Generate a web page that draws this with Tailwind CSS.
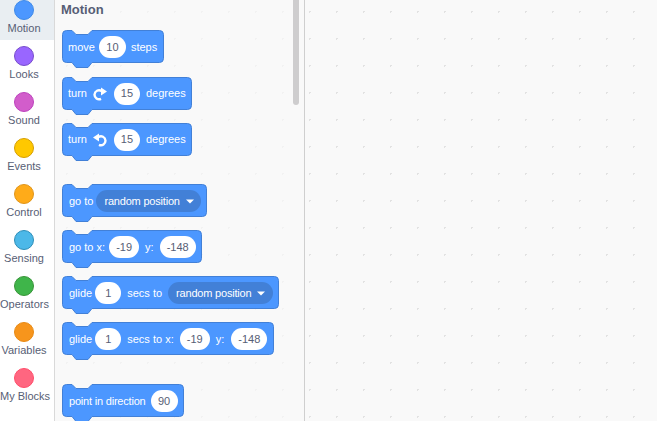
<!DOCTYPE html>
<html lang="en">
  <head>
    <meta charset="UTF-8" />
    <title>Blocks</title>
    <script src="https://cdn.jsdelivr.net/npm/@tailwindcss/browser@4"></script>
  </head>
  <body class="overflow-hidden bg-[#f9f9f9] font-['Liberation_Sans',Arial,sans-serif] text-[11px] text-[#575e75]">
    <div class="flex h-[421px] w-[657px] overflow-hidden">
      <!-- category menu -->
      <div class="flex w-[55px] shrink-0 flex-col border-r border-[#d9d9d9] bg-white pr-[6px] text-center leading-[13px]">
        <div class="-mr-[6px] -mb-[6px] h-[40px] bg-[#e9eef2] pr-[6px]">
          <div class="mx-auto h-5 w-5 rounded-full border border-[#3f8ae8] bg-[#4c97ff]"></div>
          <div class="mt-[2px]">Motion</div>
        </div>
        <div class="mt-[12px] h-[46px]"><div class="mx-auto h-5 w-5 rounded-full border border-[#774dcb] bg-[#9966ff]"></div><div class="mt-[2px]">Looks</div></div>
        <div class="h-[46px]"><div class="mx-auto h-5 w-5 rounded-full border border-[#bd42bd] bg-[#d25dcb]"></div><div class="mt-[2px]">Sound</div></div>
        <div class="h-[46px]"><div class="mx-auto h-5 w-5 rounded-full border border-[#d69e00] bg-[#ffc800]"></div><div class="mt-[2px]">Events</div></div>
        <div class="h-[46px]"><div class="mx-auto h-5 w-5 rounded-full border border-[#e0951a] bg-[#ffab19]"></div><div class="mt-[2px]">Control</div></div>
        <div class="h-[46px]"><div class="mx-auto h-5 w-5 rounded-full border border-[#2e8eb8] bg-[#4cb8e8]"></div><div class="mt-[2px]">Sensing</div></div>
        <div class="h-[46px]"><div class="mx-auto h-5 w-5 rounded-full border border-[#389438] bg-[#3fb54a]"></div><div class="mt-[2px]">Operators</div></div>
        <div class="h-[46px]"><div class="mx-auto h-5 w-5 rounded-full border border-[#e88a15] bg-[#f7951c]"></div><div class="mt-[2px]">Variables</div></div>
        <div class="h-[46px]"><div class="mx-auto h-5 w-5 rounded-full border border-[#ff4d6a] bg-[#ff6680]"></div><div class="mt-[2px] whitespace-nowrap">My Blocks</div></div>
      </div>

      <!-- block palette -->
      <div class="relative w-[250px] shrink-0 border-r border-[#cfcfcf] bg-[#f9f9f9] bg-[radial-gradient(circle,#f2f2f2_1px,transparent_1px)] bg-[size:27px_27px] bg-[position:-2px_-2px] pl-[7px] text-white">
        <div class="-ml-px h-[30px] pt-[2px] text-[13px] leading-[15px] font-bold text-[#575e75]">Motion</div>

        <div class="relative mb-[14px] flex h-[33px] w-[102px] items-center pt-px pl-[6px]">
          <svg class="absolute top-0 left-0" width="102" height="40"><path d="M.5 4.5a4 4 0 0 1 4-4H10l4 4h12l4-4h67.500a4 4 0 0 1 4 4v24a4 4 0 0 1-4 4H30l-4 5H14l-4-5H4.500a4 4 0 0 1-4-4z" fill="#4c97ff" stroke="#4280d7" /></svg>
          <span class="relative">move</span>
          <span class="relative mr-[5px] ml-[4px] flex h-[22px] w-[27px] items-center justify-center rounded-full bg-white text-[#575e75]">10</span>
          <span class="relative">steps</span>
        </div>

        <div class="relative mb-[13px] flex h-[33px] w-[130px] items-center pl-[6px]">
          <svg class="absolute top-0 left-0" width="130" height="40"><path d="M.5 4.5a4 4 0 0 1 4-4H10l4 4h12l4-4h95.500a4 4 0 0 1 4 4v24a4 4 0 0 1-4 4H30l-4 5H14l-4-5H4.500a4 4 0 0 1-4-4z" fill="#4c97ff" stroke="#4280d7" /></svg>
          <span class="relative">turn</span>
          <svg class="relative mr-[7px] ml-[6px]" width="14" height="14" viewBox="0 0 14 14"><path d="M8 11.800A4.500 4.500 0 1 1 8.500 4" fill="none" stroke="#fff" stroke-width="2.400" /><path d="M8 0.500 14 4.500 8 8.500z" fill="#fff" /></svg>
          <span class="relative mr-[6px] flex h-[22px] w-[26px] items-center justify-center rounded-full bg-white text-[#575e75]">15</span>
          <span class="relative">degrees</span>
        </div>

        <div class="relative mb-[28px] flex h-[33px] w-[130px] items-center pl-[6px]">
          <svg class="absolute top-0 left-0" width="130" height="40"><path d="M.5 4.5a4 4 0 0 1 4-4H10l4 4h12l4-4h95.500a4 4 0 0 1 4 4v24a4 4 0 0 1-4 4H30l-4 5H14l-4-5H4.500a4 4 0 0 1-4-4z" fill="#4c97ff" stroke="#4280d7" /></svg>
          <span class="relative">turn</span>
          <svg class="relative mr-[7px] ml-[6px] -scale-x-100" width="14" height="14" viewBox="0 0 14 14"><path d="M8 11.800A4.500 4.500 0 1 1 8.500 4" fill="none" stroke="#fff" stroke-width="2.400" /><path d="M8 0.500 14 4.500 8 8.500z" fill="#fff" /></svg>
          <span class="relative mr-[6px] flex h-[22px] w-[26px] items-center justify-center rounded-full bg-white text-[#575e75]">15</span>
          <span class="relative">degrees</span>
        </div>

        <div class="relative mb-[13px] flex h-[33px] w-[145px] items-center pt-px pl-[7px]">
          <svg class="absolute top-0 left-0" width="145" height="40"><path d="M.5 4.5a4 4 0 0 1 4-4H10l4 4h12l4-4h110.500a4 4 0 0 1 4 4v24a4 4 0 0 1-4 4H30l-4 5H14l-4-5H4.500a4 4 0 0 1-4-4z" fill="#4c97ff" stroke="#4280d7" /></svg>
          <span class="relative">go to</span>
          <span class="relative ml-[3px] flex h-[22px] w-[105px] items-center rounded-full bg-[#4280d7] pl-[8px] tracking-[-0.2px]">random position<svg class="ml-[6px]" width="8" height="5"><path d="M0 .5h8L4 4.500z" fill="#fff" /></svg></span>
        </div>

        <div class="relative mb-[13px] flex h-[33px] w-[140px] items-center pt-px pl-[7px]">
          <svg class="absolute top-0 left-0" width="140" height="40"><path d="M.5 4.5a4 4 0 0 1 4-4H10l4 4h12l4-4h105.500a4 4 0 0 1 4 4v24a4 4 0 0 1-4 4H30l-4 5H14l-4-5H4.500a4 4 0 0 1-4-4z" fill="#4c97ff" stroke="#4280d7" /></svg>
          <span class="relative">go to x:</span>
          <span class="relative mr-[6px] ml-[4px] flex h-[22px] w-[30px] items-center justify-center rounded-full bg-white text-[#575e75]">-19</span>
          <span class="relative">y:</span>
          <span class="relative ml-[6px] flex h-[22px] w-[36px] items-center justify-center rounded-full bg-white text-[#575e75]">-148</span>
        </div>

        <div class="relative mb-[13px] flex h-[33px] w-[217px] items-center pt-px pl-[7px]">
          <svg class="absolute top-0 left-0" width="217" height="40"><path d="M.5 4.5a4 4 0 0 1 4-4H10l4 4h12l4-4h182.500a4 4 0 0 1 4 4v24a4 4 0 0 1-4 4H30l-4 5H14l-4-5H4.500a4 4 0 0 1-4-4z" fill="#4c97ff" stroke="#4280d7" /></svg>
          <span class="relative">glide</span>
          <span class="relative mr-[6px] ml-[3px] flex h-[22px] w-[26px] items-center justify-center rounded-full bg-white text-[#575e75]">1</span>
          <span class="relative">secs to</span>
          <span class="relative ml-[6px] flex h-[22px] w-[105px] items-center rounded-full bg-[#4280d7] pl-[8px] tracking-[-0.2px]">random position<svg class="ml-[6px]" width="8" height="5"><path d="M0 .5h8L4 4.500z" fill="#fff" /></svg></span>
        </div>

        <div class="relative mb-[29px] flex h-[33px] w-[212px] items-center pt-px pl-[7px]">
          <svg class="absolute top-0 left-0" width="212" height="40"><path d="M.5 4.5a4 4 0 0 1 4-4H10l4 4h12l4-4h177.500a4 4 0 0 1 4 4v24a4 4 0 0 1-4 4H30l-4 5H14l-4-5H4.500a4 4 0 0 1-4-4z" fill="#4c97ff" stroke="#4280d7" /></svg>
          <span class="relative">glide</span>
          <span class="relative mr-[6px] ml-[3px] flex h-[22px] w-[26px] items-center justify-center rounded-full bg-white text-[#575e75]">1</span>
          <span class="relative">secs to x:</span>
          <span class="relative mr-[6px] ml-[6px] flex h-[22px] w-[30px] items-center justify-center rounded-full bg-white text-[#575e75]">-19</span>
          <span class="relative">y:</span>
          <span class="relative ml-[7px] flex h-[22px] w-[36px] items-center justify-center rounded-full bg-white text-[#575e75]">-148</span>
        </div>

        <div class="relative flex h-[33px] w-[122px] items-center pt-px pl-[7px]">
          <svg class="absolute top-0 left-0" width="122" height="40"><path d="M.5 4.5a4 4 0 0 1 4-4H10l4 4h12l4-4h87.500a4 4 0 0 1 4 4v24a4 4 0 0 1-4 4H30l-4 5H14l-4-5H4.500a4 4 0 0 1-4-4z" fill="#4c97ff" stroke="#4280d7" /></svg>
          <span class="relative tracking-[-0.2px]">point in direction</span>
          <span class="relative ml-[5px] flex h-[22px] w-[27px] items-center justify-center rounded-full bg-white text-[#575e75]">90</span>
        </div>

        <!-- scrollbar -->
        <div class="absolute top-[-6px] right-[5px] h-[111px] w-[6px] rounded-full bg-[#cecdce]"></div>
      </div>

      <!-- workspace -->
      <div class="flex-1 bg-[#f9f9f9] bg-[radial-gradient(circle,#e2e2e2_1px,transparent_1px)] bg-[size:27px_27px] bg-[position:-9px_-2px]"></div>
    </div>
  </body>
</html>
